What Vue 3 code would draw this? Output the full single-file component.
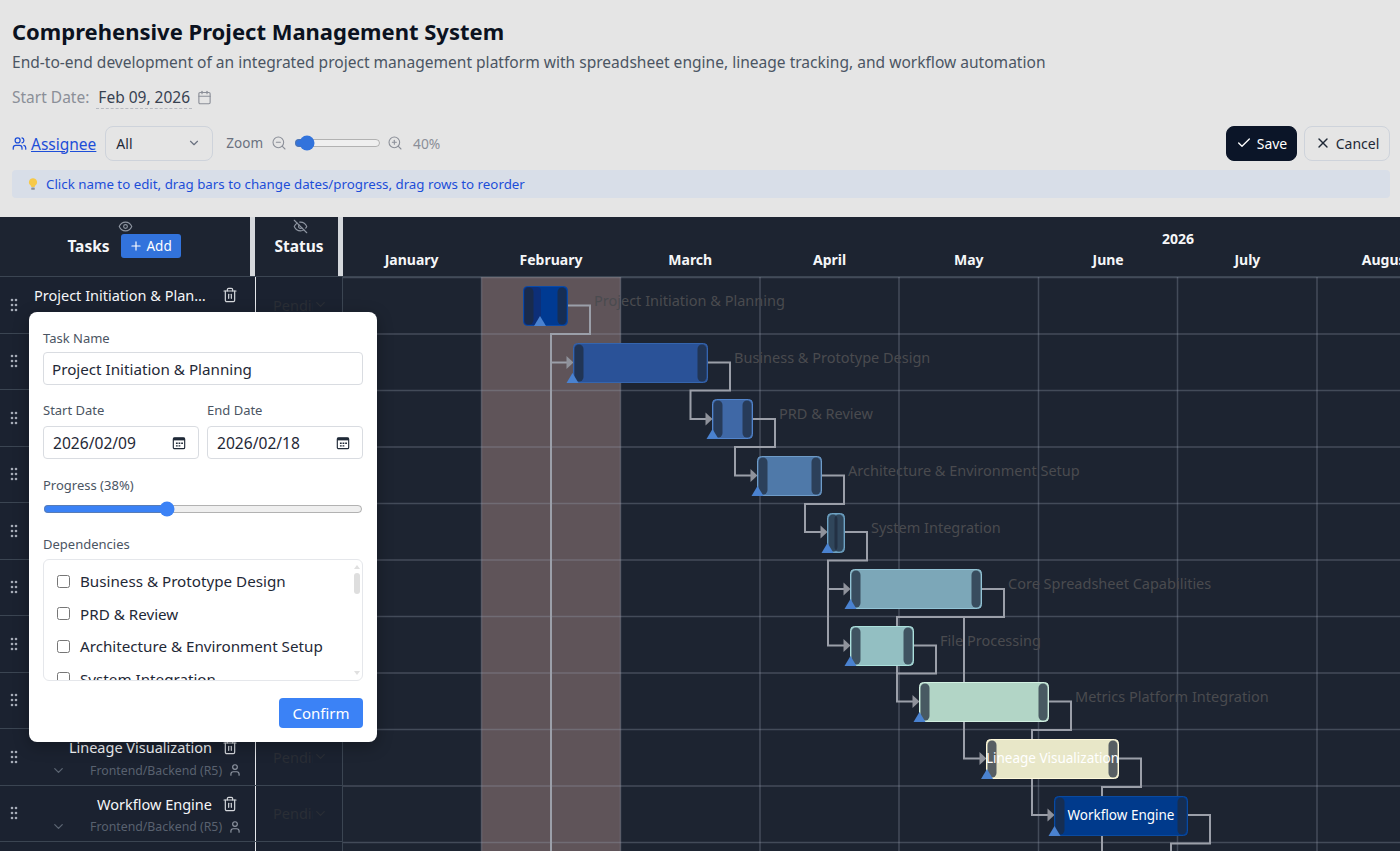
<template>
  <div class="page">
    <header class="top">
      <h1 class="title">Comprehensive Project Management System</h1>
      <p class="subtitle">End-to-end development of an integrated project management platform with spreadsheet engine, lineage tracking, and workflow automation</p>
      <div class="start-date">
        <span class="start-label">Start Date:</span>
        <span class="start-value">Feb 09, 2026</span>
        <svg class="icon start-icon" viewBox="0 0 24 24" v-html="icons.calendar"></svg>
      </div>
      <div class="toolbar">
        <svg class="icon assignee-icon" viewBox="0 0 24 24" v-html="icons.users"></svg>
        <a class="assignee" href="#">Assignee</a>
        <div class="select">
          <span>All</span>
          <svg class="icon select-icon" viewBox="0 0 24 24" v-html="icons.chevron"></svg>
        </div>
        <span class="zoom-label">Zoom</span>
        <svg class="icon zoom-icon" viewBox="0 0 24 24" v-html="icons.zoomOut"></svg>
        <input class="zoom-range" type="range" min="33" max="133" v-model="zoom" />
        <svg class="icon zoom-icon" viewBox="0 0 24 24" v-html="icons.zoomIn"></svg>
        <span class="zoom-value">{{ zoom }}%</span>
        <div class="actions">
          <button class="btn btn-save">
            <svg class="icon btn-icon" viewBox="0 0 24 24" v-html="icons.check"></svg>
            Save
          </button>
          <button class="btn btn-cancel">
            <svg class="icon btn-icon" viewBox="0 0 24 24" v-html="icons.close"></svg>
            Cancel
          </button>
        </div>
      </div>
      <div class="hint">
        <svg class="bulb" viewBox="0 0 24 24">
          <path d="M12 2a7 7 0 0 0-4 12.7c.8.6 1 1.3 1 2.3h6c0-1 .2-1.7 1-2.3A7 7 0 0 0 12 2Z" fill="#f7c948" />
          <rect x="9" y="18" width="6" height="4" rx="1" fill="#8b8f98" />
        </svg>
        Click name to edit, drag bars to change dates/progress, drag rows to reorder
      </div>
    </header>

    <section class="gantt">
      <div class="gantt-head">
        <div class="head-tasks">
          <svg class="icon head-eye" viewBox="0 0 24 24" v-html="icons.eye"></svg>
          <span class="head-title">Tasks</span>
          <button class="add-btn">
            <svg class="icon add-icon" viewBox="0 0 24 24" v-html="icons.plus"></svg>
            Add
          </button>
        </div>
        <div class="head-sep"></div>
        <div class="head-status">
          <svg class="icon head-eye" viewBox="0 0 24 24" v-html="icons.eyeOff"></svg>
          <span class="head-title">Status</span>
        </div>
        <div class="head-sep"></div>
        <div class="head-time">
          <div class="year">2026</div>
          <div class="months">
            <span v-for="m in months" :key="m" class="month">{{ m }}</span>
          </div>
        </div>
      </div>

      <div class="gantt-body">
        <div class="task-side">
          <div v-for="t in tasks" :key="t" class="row">
            <div class="row-grip">
              <svg class="grip" viewBox="0 0 8 14">
                <circle v-for="d in gripDots" :key="d.id" :cx="d.x" :cy="d.y" r="1.3" />
              </svg>
            </div>
            <div class="row-task">
              <div class="row-top">
                <span class="row-name">{{ t }}</span>
                <svg class="icon row-trash" viewBox="0 0 24 24" v-html="icons.trash"></svg>
              </div>
              <div class="row-bottom">
                <svg class="icon row-chevron" viewBox="0 0 24 24" v-html="icons.chevron"></svg>
                <span class="row-owner">Frontend/Backend (R5)</span>
                <svg class="icon row-user" viewBox="0 0 24 24" v-html="icons.user"></svg>
              </div>
            </div>
            <div class="row-status">
              <span class="status-text">Pending</span>
              <svg class="icon status-chevron" viewBox="0 0 24 24" v-html="icons.chevron"></svg>
            </div>
          </div>
          <!-- next row only peeks in at the bottom edge -->
          <div class="row">
            <div class="row-grip"></div>
            <div class="row-task"></div>
            <div class="row-status"></div>
          </div>
        </div>

        <svg class="chart" viewBox="343 277 1057 574">
          <rect x="481.5" y="277" width="139" height="574" fill="#5f5459" />
          <line v-for="x in gridX" :key="x" :x1="x" :x2="x" y1="277" y2="851" class="grid-line" />
          <line v-for="y in gridY" :key="y" x1="343" x2="1400" :y1="y" :y2="y" class="grid-line" />
          <polyline v-for="(l, i) in links" :key="i" :points="l" class="link" />
          <polygon v-for="a in arrows" :key="a.x + '-' + a.y" :points="arrowPoints(a)" fill="#8f929b" />
          <g v-for="b in bars" :key="b.name">
            <rect :x="b.x + 0.5" :y="b.y + 0.5" :width="b.w - 1" height="39" rx="4" :fill="b.fill" :stroke="b.edge" />
            <rect v-if="b.done" :x="b.x + 1" :y="b.y + 1" :width="b.done" height="38" rx="4" fill="#0d2f78" />
            <rect :x="b.x + 1.5" :y="b.y + 1.5" width="9" height="37" rx="4.5" class="handle" />
            <rect :x="b.x + b.w - 10.5" :y="b.y + 1.5" width="9" height="37" rx="4.5" class="handle" />
            <polygon :points="thumbPoints(b)" fill="#4a82d0" />
            <text v-if="b.inside" :x="b.x + b.w / 2" :y="b.y + 24" text-anchor="middle" class="bar-inner">{{ b.name }}</text>
            <text v-else :x="b.x + b.w + 26" :y="b.y + 16" class="bar-label">{{ b.name }}</text>
          </g>
        </svg>

        <div class="popup">
          <label class="field-label">Task Name</label>
          <input class="text-input" type="text" value="Project Initiation & Planning" />
          <div class="date-row">
            <div class="date-col">
              <label class="field-label">Start Date</label>
              <div class="date-input">
                <span>2026/02/09</span>
                <svg class="picker" viewBox="0 0 16 16" v-html="icons.picker"></svg>
              </div>
            </div>
            <div class="date-col">
              <label class="field-label">End Date</label>
              <div class="date-input">
                <span>2026/02/18</span>
                <svg class="picker" viewBox="0 0 16 16" v-html="icons.picker"></svg>
              </div>
            </div>
          </div>
          <label class="field-label progress-label">Progress ({{ progress }}%)</label>
          <input class="progress-range" type="range" min="0" max="100" v-model="progress" />
          <label class="field-label deps-label">Dependencies</label>
          <div class="deps-wrap">
            <div class="deps">
              <label v-for="d in tasks.slice(1)" :key="d" class="dep">
                <input type="checkbox" />
                <span>{{ d }}</span>
              </label>
            </div>
            <i class="scroll-up"></i>
            <i class="scroll-thumb"></i>
            <i class="scroll-down"></i>
          </div>
          <div class="popup-foot">
            <button class="confirm">Confirm</button>
          </div>
        </div>
      </div>
    </section>
  </div>
</template>

<script setup>
import { ref } from "vue";

const zoom = ref(40);
const progress = ref(38);

const icons = {
  calendar: '<rect x="3" y="4" width="18" height="18" rx="2"/><path d="M16 2v4"/><path d="M8 2v4"/><path d="M3 10h18"/>',
  users: '<path d="M16 21v-2a4 4 0 0 0-4-4H6a4 4 0 0 0-4 4v2"/><circle cx="9" cy="7" r="4"/><path d="M22 21v-2a4 4 0 0 0-3-3.87"/><path d="M16 3.13a4 4 0 0 1 0 7.75"/>',
  user: '<path d="M19 21v-2a4 4 0 0 0-4-4H9a4 4 0 0 0-4 4v2"/><circle cx="12" cy="7" r="4"/>',
  chevron: '<path d="m6 9 6 6 6-6"/>',
  zoomOut: '<circle cx="11" cy="11" r="8"/><path d="m21 21-4.3-4.3"/><path d="M8 11h6"/>',
  zoomIn: '<circle cx="11" cy="11" r="8"/><path d="m21 21-4.3-4.3"/><path d="M11 8v6"/><path d="M8 11h6"/>',
  check: '<path d="M20 6 9 17l-5-5"/>',
  close: '<path d="M18 6 6 18"/><path d="m6 6 12 12"/>',
  plus: '<path d="M5 12h14"/><path d="M12 5v14"/>',
  eye: '<path d="M2 12s3-7 10-7 10 7 10 7-3 7-10 7-10-7-10-7Z"/><circle cx="12" cy="12" r="3"/>',
  eyeOff: '<path d="M9.88 9.88a3 3 0 1 0 4.24 4.24"/><path d="M10.73 5.08A10.43 10.43 0 0 1 12 5c7 0 10 7 10 7a13.16 13.16 0 0 1-1.67 2.68"/><path d="M6.61 6.61A13.526 13.526 0 0 0 2 12s3 7 10 7a9.74 9.74 0 0 0 5.39-1.61"/><path d="m2 2 20 20"/>',
  trash: '<path d="M3 6h18"/><path d="M19 6v14c0 1-1 2-2 2H7c-1 0-2-1-2-2V6"/><path d="M8 6V4c0-1 1-2 2-2h4c1 0 2 1 2 2v2"/><path d="M10 11v6"/><path d="M14 11v6"/>',
  picker: '<rect x="1.5" y="2" width="13" height="12.5" rx="1.5" fill="none" stroke="#1f2937" stroke-width="1.3"/><rect x="1.5" y="2" width="13" height="3" fill="#1f2937"/><path d="M4.5 7.5h2v1.5h-2zM7.5 7.5h2v1.5h-2zM10.5 7.5h2v1.5h-2zM4.5 10.5h2V12h-2zM7.5 10.5h2V12h-2z" fill="#1f2937"/>',
};

const gripDots = [
  { id: 1, x: 2, y: 2 },
  { id: 2, x: 6, y: 2 },
  { id: 3, x: 2, y: 7 },
  { id: 4, x: 6, y: 7 },
  { id: 5, x: 2, y: 12 },
  { id: 6, x: 6, y: 12 },
];

const months = ["January", "February", "March", "April", "May", "June", "July", "August"];

const tasks = [
  "Project Initiation & Planning",
  "Business & Prototype Design",
  "PRD & Review",
  "Architecture & Environment Setup",
  "System Integration",
  "Core Spreadsheet Capabilities",
  "File Processing",
  "Metrics Platform Integration",
  "Lineage Visualization",
  "Workflow Engine",
];

const gridX = [481.5, 620.5, 760, 899, 1038.5, 1177.5, 1317];
const gridY = [277.5, 334, 390.5, 447, 503.5, 560, 616.5, 673, 729.5, 786, 842.5];

const bars = [
  { name: tasks[0], x: 523, y: 286, w: 45, fill: "#003a92", edge: "#0a4aa8", done: 17, thumb: 540 },
  { name: tasks[1], x: 573, y: 343, w: 135, fill: "#2a5298", edge: "#3565ae", thumb: 572.5 },
  { name: tasks[2], x: 712, y: 399, w: 41, fill: "#3f68a6", edge: "#5285cc", thumb: 712.5 },
  { name: tasks[3], x: 757, y: 456, w: 65, fill: "#4f79a9", edge: "#6f9cc8", thumb: 757.5 },
  { name: tasks[4], x: 827, y: 513, w: 18, fill: "#5f8fae", edge: "#6fa3c4", thumb: 827.5 },
  { name: tasks[5], x: 850, y: 569, w: 132, fill: "#7ca7b8", edge: "#93c4d6", thumb: 850.5 },
  { name: tasks[6], x: 850, y: 626, w: 64, fill: "#93bfc2", edge: "#ace0dc", thumb: 850.5 },
  { name: tasks[7], x: 919, y: 682, w: 130, fill: "#b2d5c6", edge: "#d2f0e2", thumb: 919.5 },
  { name: tasks[8], x: 986, y: 739, w: 133, fill: "#e8e7c8", edge: "#fff9dc", thumb: 987, inside: true },
  { name: tasks[9], x: 1054, y: 796, w: 134, fill: "#003a8c", edge: "#0a4aa0", thumb: 1054.5, inside: true },
];

const links = [
  "568,305.5 590,305.5 590,334 551,334 551,851",
  "551,362.5 567,362.5",
  "708,362.5 730,362.5 730,390.5 690.5,390.5 690.5,419 706,419",
  "753,419 775,419 775,447 735,447 735,475.5 751,475.5",
  "822,475.5 844,475.5 844,504 805,504 805,532 821,532",
  "845,532 867,532 867,560.5 828,560.5 828,645.5 844,645.5",
  "828,589 844,589",
  "982,589 1004,589 1004,617 897,617 897,701.5 913,701.5",
  "964,617 964,758.5 980,758.5",
  "914,645.5 936,645.5 936,673.5 897,673.5",
  "1049,701.5 1071,701.5 1071,730 1032,730 1032,815 1048,815",
  "1119,758.5 1141,758.5 1141,787 1102,787 1102,851",
  "1188,815 1210,815 1210,843.5 1171,843.5 1171,851",
];

const arrows = [
  { x: 567, y: 362.5 },
  { x: 706, y: 419 },
  { x: 751, y: 475.5 },
  { x: 821, y: 532 },
  { x: 844, y: 589 },
  { x: 844, y: 645.5 },
  { x: 913, y: 701.5 },
  { x: 980, y: 758.5 },
  { x: 1048, y: 815 },
];

const arrowPoints = (a) => `${a.x - 0.5},${a.y - 6.5} ${a.x + 6.5},${a.y} ${a.x - 0.5},${a.y + 6.5}`;

const thumbPoints = (b) => {
  const bottom = b.y + 40;
  return `${b.thumb - 6},${bottom} ${b.thumb},${bottom - 10} ${b.thumb + 6},${bottom}`;
};
</script>

<style scoped>
.page {
  width: 1400px;
  height: 851px;
  overflow: hidden;
  background: #e5e5e5;
  font-family: "Noto Sans", "Liberation Sans", sans-serif;
  display: flex;
  flex-direction: column;
}

.icon {
  fill: none;
  stroke: currentColor;
  stroke-width: 2;
  stroke-linecap: round;
  stroke-linejoin: round;
  flex: none;
}

/* top section */
.top {
  height: 216px;
  box-sizing: border-box;
  padding: 16px 10px 0 12px;
  flex: none;
}

.title {
  margin: 0;
  font-size: 22px;
  line-height: 30px;
  font-weight: 700;
  color: #0b1220;
}

.subtitle {
  margin: 1px 0 0;
  font-size: 15.56px;
  line-height: 30px;
  color: #4b5563;
}

.start-date {
  display: flex;
  align-items: center;
  height: 24px;
  margin-top: 8px;
  font-size: 15.5px;
}

.start-label {
  color: #8b8f98;
}

.start-value {
  margin-left: 7px;
  padding: 0 2px;
  color: #374151;
  border-bottom: 1px dashed #b6b9c0;
}

.start-icon {
  width: 15px;
  height: 15px;
  margin-left: 5px;
  color: #8b8f98;
  stroke-width: 1.8;
}

.toolbar {
  display: flex;
  align-items: center;
  height: 36px;
  margin-top: 16px;
}

.assignee-icon {
  width: 15px;
  height: 15px;
  color: #1d4ed8;
}

.assignee {
  margin-left: 4px;
  padding-top: 1px;
  font-size: 15.5px;
  color: #1d4ed8;
}

.select {
  display: flex;
  align-items: center;
  justify-content: space-between;
  box-sizing: border-box;
  width: 108px;
  height: 35px;
  margin-left: 9px;
  padding: 0 11px 0 10px;
  border: 1px solid #ced3db;
  border-radius: 8px;
  font-size: 14px;
  color: #1f2937;
}

.select-icon {
  width: 14px;
  height: 14px;
  color: #6b7280;
}

.zoom-label {
  margin-left: 13px;
  font-size: 13.5px;
  color: #6b7280;
}

.zoom-icon {
  width: 16px;
  height: 16px;
  color: #8b8f98;
  stroke-width: 1.6;
}

.zoom-label + .zoom-icon {
  margin-left: 8px;
}

.zoom-range {
  width: 87px;
  height: 16px;
  margin: 0 6px 0 7px;
  accent-color: #3273dc;
}

.zoom-value {
  margin-left: 10px;
  font-size: 13.8px;
  color: #8b8f98;
}

.actions {
  display: flex;
  gap: 7px;
  margin-left: auto;
}

.btn {
  display: flex;
  align-items: center;
  justify-content: center;
  gap: 5px;
  height: 35px;
  box-sizing: border-box;
  border-radius: 8px;
  font-family: inherit;
  font-size: 14px;
  cursor: pointer;
}

.btn-icon {
  width: 16px;
  height: 16px;
}

.btn-save {
  width: 71px;
  background: #0b1528;
  color: #fff;
  border: 1px solid #0b1528;
}

.btn-cancel {
  width: 86px;
  background: transparent;
  color: #1f2937;
  border: 1px solid #ced3db;
}

.hint {
  display: flex;
  align-items: center;
  height: 28px;
  margin-top: 9px;
  padding-left: 14px;
  border-radius: 4px;
  background: #d8dee8;
  font-size: 13.32px;
  color: #1d4ed8;
}

.bulb {
  width: 14px;
  height: 14px;
  margin-right: 6px;
}

/* gantt */
.gantt {
  flex: 1;
  margin-top: 1px;
  background: #1d2431;
  display: flex;
  flex-direction: column;
  min-height: 0;
}

.gantt-head {
  display: flex;
  height: 60px;
  flex: none;
  border-bottom: 1px solid #3b4552;
  box-sizing: border-box;
  color: #f5f6f8;
}

.head-tasks {
  position: relative;
  width: 250px;
  flex: none;
  display: flex;
  align-items: center;
  justify-content: center;
  gap: 11px;
  padding-right: 2px;
  padding-bottom: 1px;
  box-sizing: border-box;
}

.head-status {
  position: relative;
  width: 83px;
  flex: none;
  display: flex;
  align-items: center;
  justify-content: center;
  padding-left: 5px;
  padding-bottom: 1px;
  box-sizing: border-box;
}

.head-eye {
  position: absolute;
  top: 2px;
  left: 50%;
  width: 15px;
  height: 15px;
  margin-left: -7px;
  color: #8e95a1;
  stroke-width: 1.8;
}

.head-status .head-eye {
  margin-left: -4px;
}

.head-title {
  font-size: 15.5px;
  font-weight: 700;
}

.head-sep {
  width: 5px;
  flex: none;
  background: #d5d8dc;
}

.add-btn {
  display: flex;
  align-items: center;
  justify-content: center;
  gap: 3px;
  width: 60px;
  height: 24px;
  border: none;
  border-radius: 3px;
  background: #3273dc;
  color: #fff;
  font-family: inherit;
  font-size: 13.5px;
}

.add-icon {
  width: 14px;
  height: 14px;
}

.head-time {
  flex: 1;
  min-width: 0;
  overflow: hidden;
  padding-top: 11px;
  margin-left: -1px;
}

.year {
  width: 1672px;
  text-align: center;
  font-size: 14px;
  line-height: 21px;
  font-weight: 700;
}

.months {
  display: flex;
}

.month {
  flex: none;
  width: 139.3px;
  text-align: center;
  font-size: 14px;
  line-height: 21px;
  font-weight: 700;
}

.gantt-body {
  position: relative;
  flex: 1;
  display: flex;
  min-height: 0;
  overflow: hidden;
}

.task-side {
  width: 343px;
  flex: none;
}

.row {
  display: flex;
  height: 56.5px;
  box-sizing: border-box;
  border-bottom: 1px solid #3b4552;
  background: #1b2230;
  color: #f5f6f8;
}

.row-grip {
  width: 28px;
  flex: none;
  display: flex;
  align-items: center;
  justify-content: center;
}

.grip {
  width: 8px;
  height: 14px;
  fill: #a7adb8;
}

.row-task {
  width: 228px;
  flex: none;
  box-sizing: border-box;
  padding-top: 6px;
  border-right: 1px solid #e5e7eb;
}

.row-top {
  display: flex;
  align-items: center;
  height: 24px;
  padding-left: 6px;
}

.row-name {
  width: 178px;
  text-align: right;
  font-size: 14.5px;
  white-space: nowrap;
  overflow: hidden;
  text-overflow: ellipsis;
}

.row-trash {
  width: 16px;
  height: 16px;
  margin-left: 10px;
  color: #d5d8dc;
  stroke-width: 1.8;
}

.row-bottom {
  display: flex;
  align-items: center;
  height: 20px;
  margin-top: 1px;
}

.row-chevron {
  width: 15px;
  height: 15px;
  margin-left: 22.5px;
  color: #5c6573;
}

.row-owner {
  margin-left: 24.5px;
  font-size: 12.3px;
  white-space: nowrap;
  color: #59616f;
}

.row-user {
  width: 14px;
  height: 14px;
  margin-left: 6px;
  color: #8e95a1;
}

.row-status {
  flex: 1;
  display: flex;
  align-items: center;
  justify-content: center;
  padding-left: 3px;
  border-right: 1px solid #3b4552;
  color: #2a2e36;
}

.status-text {
  width: 40px;
  overflow: hidden;
  white-space: nowrap;
  font-size: 14.5px;
}

.status-chevron {
  width: 15px;
  height: 15px;
}

.chart {
  width: 1057px;
  height: 574px;
  flex: none;
}

.grid-line {
  stroke: rgba(150, 160, 175, 0.32);
  stroke-width: 1.5;
}

.link {
  fill: none;
  stroke: #9b9fa9;
  stroke-width: 2;
}

.handle {
  fill: #1e293b;
  fill-opacity: 0.72;
}

.bar-label {
  fill: #4a4b4f;
  font-size: 14.5px;
  dominant-baseline: middle;
}

.bar-inner {
  fill: #fff;
  font-size: 13.5px;
}

/* edit popup */
.popup {
  position: absolute;
  left: 29px;
  top: 35px;
  width: 348px;
  height: 430px;
  box-sizing: border-box;
  padding: 16px 14px 14px;
  background: #fff;
  border-radius: 8px;
  box-shadow: 0 4px 16px rgba(0, 0, 0, 0.3);
  display: flex;
  flex-direction: column;
}

.field-label {
  display: block;
  font-size: 13px;
  line-height: 20px;
  color: #4b5563;
}

.text-input {
  box-sizing: border-box;
  width: 100%;
  height: 33px;
  margin-top: 4px;
  padding: 0 8px;
  border: 1px solid #d9dce1;
  border-radius: 4px;
  font-family: inherit;
  font-size: 15.2px;
  color: #1f2937;
  outline: none;
}

.date-row {
  display: flex;
  gap: 8px;
  margin-top: 15px;
}

.date-col {
  flex: 1;
}

.date-input {
  display: flex;
  align-items: center;
  justify-content: space-between;
  box-sizing: border-box;
  height: 33px;
  margin-top: 6px;
  padding: 0 12px 0 9px;
  border: 1px solid #d9dce1;
  border-radius: 4px;
  font-size: 15.6px;
  color: #1f2937;
}

.picker {
  width: 14px;
  height: 14px;
}

.progress-label {
  margin-top: 16px;
}

.progress-range {
  width: 100%;
  height: 16px;
  margin: 6px 0 0;
  accent-color: #3b82f6;
}

.deps-label {
  margin-top: 17px;
}

.deps-wrap {
  position: relative;
  margin-top: 5px;
}

.deps {
  box-sizing: border-box;
  height: 122px;
  padding: 5px 0 0 13px;
  border: 1px solid #e5e7eb;
  border-radius: 6px;
  overflow: hidden;
}

.scroll-thumb {
  position: absolute;
  top: 14px;
  right: 3px;
  width: 6px;
  height: 21px;
  border-radius: 3px;
  background: #dedede;
}

.scroll-up,
.scroll-down {
  position: absolute;
  right: 3px;
  width: 0;
  height: 0;
  border-left: 3px solid transparent;
  border-right: 3px solid transparent;
}

.scroll-up {
  top: 6px;
  border-bottom: 4px solid #e0e0e0;
}

.scroll-down {
  bottom: 6px;
  border-top: 4px solid #e0e0e0;
}

.dep {
  display: flex;
  align-items: center;
  gap: 10px;
  height: 32.5px;
  font-size: 15.2px;
  white-space: nowrap;
  color: #1f2937;
}

.dep input {
  width: 13px;
  height: 13px;
  margin: 0;
  flex: none;
}

.popup-foot {
  display: flex;
  justify-content: flex-end;
  margin-top: 17px;
}

.confirm {
  width: 84px;
  height: 30px;
  border: none;
  border-radius: 4px;
  background: #3b82f6;
  color: #fff;
  font-family: inherit;
  font-size: 15px;
}
</style>
